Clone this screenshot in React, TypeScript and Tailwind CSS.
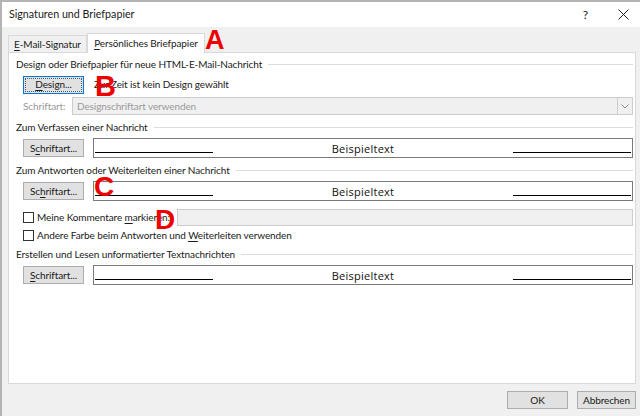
import React from "react";

const ui = "font-['Lato','Noto_Sans',sans-serif]";

const Mn = ({ children }: { children: React.ReactNode }) => (
  <span className="underline underline-offset-2 decoration-1">{children}</span>
);

function Section({ title }: { title: React.ReactNode }) {
  return (
    <div className="flex items-center h-[14px]">
      <span className="whitespace-nowrap">{title}</span>
      <div className="ml-[6px] flex-1 h-px bg-[#dcdcdc]" />
    </div>
  );
}

function Btn({ children, focus }: { children: React.ReactNode; focus?: boolean }) {
  return (
    <div
      className={
        "h-[18px] w-[61px] shrink-0 flex items-center justify-center bg-[#e1e1e1] border whitespace-nowrap " +
        (focus ? "border-[#0078d7]" : "border-[#adadad]")
      }
    >
      {focus ? (
        <div className="w-[57px] h-[14px] border border-dotted border-[#555] flex items-center justify-center">
          {children}
        </div>
      ) : (
        children
      )}
    </div>
  );
}

function Preview() {
  return (
    <div className="flex-1 h-[20px] ml-[9px] border border-[#7a7a7a] flex items-end px-px pb-[4px]">
      <div className="w-[118px] h-px bg-black" />
      <div className="flex-1 self-center text-center font-['Open_Sans',sans-serif] text-[11px] tracking-[0.25px] leading-none -mb-[4px] text-[#111]">
        Beispieltext
      </div>
      <div className="w-[118px] h-px bg-black" />
    </div>
  );
}

function Box() {
  return <div className="w-[11px] h-[11px] border border-[#333] bg-white shrink-0" />;
}

const Red = ({ children, className }: { children: React.ReactNode; className: string }) => (
  <div
    className={
      "absolute font-['Liberation_Sans',sans-serif] font-bold leading-none text-[#ee0000] " + className
    }
  >
    {children}
  </div>
);

export default function App() {
  return (
    <div
      className={`${ui} relative w-[640px] h-[416px] overflow-hidden bg-[#f0f0f0] border-l-2 border-t-2 border-[#b4b4b4] text-[10px] tracking-[-0.1px] text-[#1a1a1a] flex flex-col`}
    >
      {/* title bar */}
      <div className="h-[25px] bg-white flex items-center pl-[7px] pr-[10px] shrink-0 text-[10.7px] tracking-normal">
        <span>Signaturen und Briefpapier</span>
        <span className="ml-auto text-[12px] mr-[30px]">?</span>
        <svg width="11" height="11" viewBox="0 0 11 11" className="mr-[1px]">
          <path d="M0.5 0.5 L10.5 10.5 M10.5 0.5 L0.5 10.5" stroke="#222" strokeWidth="1" />
        </svg>
      </div>

      <div className="px-[6px] pr-[4px] pt-[6px] flex flex-col">
        {/* tabs */}
        <div className="flex items-end h-[19px]">
          <div className="h-[17px] w-[79px] border border-b-0 border-[#d9d9d9] flex items-center justify-center whitespace-nowrap">
            <span>
              <Mn>E</Mn>-Mail-Signatur
            </span>
          </div>
          <div className="h-[20px] w-[118px] -mb-px bg-white border border-b-0 border-[#d9d9d9] flex items-center justify-center relative z-10 whitespace-nowrap">
            <span>
              <Mn>P</Mn>ersönliches Briefpapier
            </span>
          </div>
        </div>

        {/* panel */}
        <div className="h-[332px] bg-white border border-[#d9d9d9] pl-[7px] pr-[2px] flex flex-col">
          <div className="mt-[4px]">
            <Section title="Design oder Briefpapier für neue HTML-E-Mail-Nachricht" />
          </div>
          <div className="mt-[5px] h-[17px] flex items-center pl-[7px]">
            <Btn focus>
              <span>
                <Mn>D</Mn>esign...
              </span>
            </Btn>
            <span className="ml-[10px]">Zur Zeit ist kein Design gewählt</span>
          </div>
          <div className="mt-[4px] h-[18px] flex items-center pl-[7px]">
            <span className="text-[#9a9a9a] w-[49px] whitespace-nowrap">Schriftart:</span>
            <div className="flex-1 h-[18px] bg-[#f0f0f0] border border-[#cccccc] flex items-center pl-[4px] text-[#9a9a9a]">
              <span>Designschriftart verwenden</span>
              <div className="ml-auto w-[15px] h-[16px] border-l border-[#cccccc] flex items-center justify-center">
                <svg width="8" height="5" viewBox="0 0 8 5">
                  <path d="M0.5 0.5 L4 4 L7.5 0.5" stroke="#8a8a8a" fill="none" />
                </svg>
              </div>
            </div>
          </div>

          <div className="mt-[5px]">
            <Section title="Zum Verfassen einer Nachricht" />
          </div>
          <div className="mt-[4px] h-[20px] flex items-center pl-[7px]">
            <Btn>
              <span>
                S<Mn>c</Mn>hriftart...
              </span>
            </Btn>
            <Preview />
          </div>

          <div className="mt-[5px]">
            <Section title="Zum Antworten oder Weiterleiten einer Nachricht" />
          </div>
          <div className="mt-[4px] h-[20px] flex items-center pl-[7px]">
            <Btn>
              <span>
                Sc<Mn>h</Mn>riftart...
              </span>
            </Btn>
            <Preview />
          </div>

          <div className="mt-[8px] h-[17px] flex items-center pl-[7px]">
            <Box />
            <span className="ml-[3px] w-[140px] whitespace-nowrap">
              Meine Kommentare <Mn>m</Mn>arkieren:
            </span>
            <div className="flex-1 h-[17px] bg-[#f0f0f0] border border-[#cccccc]" />
          </div>
          <div className="mt-px h-[16px] flex items-center pl-[7px]">
            <Box />
            <span className="ml-[3px] whitespace-nowrap">
              Andere Farbe beim Antworten und <Mn>W</Mn>eiterleiten verwenden
            </span>
          </div>

          <div className="mt-[4px]">
            <Section title="Erstellen und Lesen unformatierter Textnachrichten" />
          </div>
          <div className="mt-[4px] h-[20px] flex items-center pl-[7px]">
            <Btn>
              <span>
                <Mn>S</Mn>chriftart...
              </span>
            </Btn>
            <Preview />
          </div>
        </div>

        {/* footer */}
        <div className="mt-[7px] flex justify-end gap-[9px]">
          <div className="h-[18px] w-[61px] bg-[#e1e1e1] border border-[#adadad] flex items-center justify-center">
            OK
          </div>
          <div className="h-[18px] w-[59px] bg-[#e1e1e1] border border-[#adadad] flex items-center justify-center">
            Abbrechen
          </div>
        </div>
      </div>

      {/* annotation letters */}
      <Red className="left-[203px] top-[25px] text-[27px]">A</Red>
      <Red className="left-[93px] top-[70px] text-[29px]">B</Red>
      <Red className="left-[92px] top-[171px] text-[28px]">C</Red>
      <Red className="left-[153px] top-[204px] text-[28px]">D</Red>
    </div>
  );
}
